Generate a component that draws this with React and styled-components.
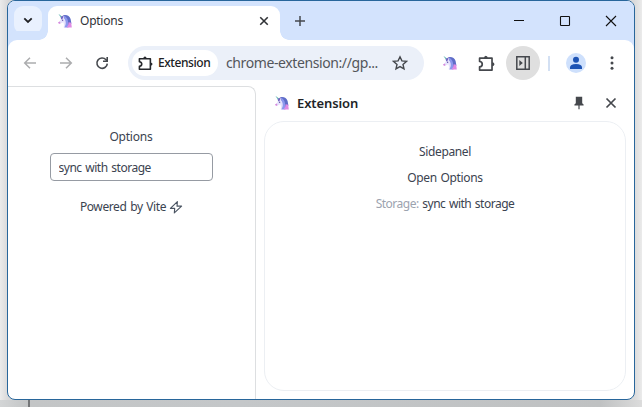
import React from "react";
import styled, { createGlobalStyle } from "styled-components";

const Global = createGlobalStyle`
  * { box-sizing: border-box; }
  body { margin: 0; overflow: hidden; font-family: "Noto Sans", "Open Sans", sans-serif; }
  svg { display: block; flex: none; }
`;

const Desktop = styled.div`
  width: 642px;
  height: 407px;
  padding: 0 7px 7px;
  background: linear-gradient(to right, transparent 28px, #747678 28px, #747678 30px, transparent 30px) 0 400px / 642px 7px no-repeat,
    linear-gradient(to right, #d3d5d6 0, #c3c5c6 28px, #c4c7c9 240px, #bfc1c2 600px, #dcdcdc 642px) 0 400px / 642px 7px no-repeat,
    linear-gradient(to right, #ebebeb, #d8d8d9 8px, #dadada 634px, #ebebeb);
`;

const Window = styled.div`
  width: 628px;
  height: 400px;
  display: flex;
  flex-direction: column;
  border: 1px solid #28669b;
  border-radius: 8px;
  background: #fff;
  overflow: hidden;
`;

const TabStrip = styled.header`
  height: 39px;
  flex: none;
  display: flex;
  align-items: flex-start;
  padding: 5px 0 0 6px;
  background: #d3e3fd;
`;

const TabSearch = styled.button`
  width: 28px;
  height: 28px;
  padding: 0;
  border: 0;
  border-radius: 9px;
  display: grid;
  place-items: center;
  background: #e9f1fe;
`;

const Tab = styled.div`
  position: relative;
  width: 232px;
  height: 34px;
  margin-left: 6px;
  display: flex;
  align-items: center;
  padding: 0 10px 4px 9px;
  border-radius: 9px 9px 0 0;
  background: #fff;
  &::before, &::after {
    content: "";
    position: absolute;
    bottom: 0;
    width: 9px;
    height: 9px;
  }
  &::before { left: -9px; background: radial-gradient(circle at 0 0, transparent 8.5px, #fff 9px); }
  &::after { right: -9px; background: radial-gradient(circle at 100% 0, transparent 8.5px, #fff 9px); }
`;

const Label = styled.span`
  font-size: ${(p) => p.$size || 12}px;
  font-weight: ${(p) => p.$weight || 400};
  letter-spacing: ${(p) => p.$track || 0}px;
  word-spacing: 1px;
  color: ${(p) => p.$color || "#3b4350"};
  line-height: 18px;
  white-space: nowrap;
`;

const TabTitle = styled(Label)`
  margin-left: 7px;
  flex: 1;
`;

const NewTab = styled.div`
  width: 36px;
  height: 30px;
  margin-left: 2px;
  display: grid;
  place-items: center;
`;

const Controls = styled.div`
  margin-left: auto;
  display: flex;
  height: 30px;
`;

const Slot = styled.div`
  width: ${(p) => p.$w || 36}px;
  height: 100%;
  flex: none;
  display: grid;
  place-items: center;
`;

const Toolbar = styled.nav`
  height: 46px;
  flex: none;
  display: flex;
  align-items: center;
  padding-left: 4px;
  background: #fff;
  border-radius: 9px 9px 0 0;
  box-shadow: 0 -9px 0 #d3e3fd;
`;

const Omnibox = styled.div`
  width: 296px;
  height: 34px;
  margin: 0 8px;
  display: flex;
  align-items: center;
  padding: 0 16px 0 4px;
  border-radius: 17px;
  background: #ebf0f9;
`;

const Chip = styled.div`
  width: 86px;
  height: 26px;
  display: flex;
  align-items: center;
  gap: 5px;
  padding-left: 6px;
  border-radius: 13px;
  background: #fff;
`;

const Url = styled(Label)`
  flex: 1;
  margin-left: 8px;
`;

const PanelToggle = styled.div`
  width: 34px;
  height: 34px;
  display: grid;
  place-items: center;
  border-radius: 50%;
  background: #dfdfdf;
`;

const Divider = styled.div`
  width: 2px;
  height: 15px;
  background: #d3e0f3;
`;

const Body = styled.div`
  flex: 1;
  display: flex;
  min-height: 0;
`;

const Page = styled.main`
  width: 248px;
  display: flex;
  flex-direction: column;
  align-items: center;
  padding: 41px 1px 0 0;
  border-top: 1px solid #dddfe1;
  border-right: 1px solid #dddfe1;
  border-radius: 0 8px 0 0;
`;

const Field = styled.input`
  width: 163px;
  height: 28px;
  margin: 7px 0 17px;
  padding: 1px 8px 0;
  border: 1px solid #969ba3;
  border-radius: 4px;
  outline: 0;
  font: 12px "Noto Sans", sans-serif;
  letter-spacing: -0.48px;
  word-spacing: 1px;
  color: #3b4350;
`;

const Powered = styled.div`
  display: flex;
  align-items: center;
  gap: 3px;
  padding-left: 1px;
`;

const SidePanel = styled.aside`
  flex: 1;
  display: flex;
  flex-direction: column;
  padding: 0 8px 8px;
`;

const PanelHeader = styled.div`
  height: 35px;
  flex: none;
  display: flex;
  align-items: center;
  padding: 0 0 2px 10px;
  margin-right: -1px;
`;

const PanelTitle = styled(Label)`
  margin-left: 7px;
  flex: 1;
`;

const PanelCard = styled.section`
  width: 362px;
  height: 270px;
  display: flex;
  flex-direction: column;
  align-items: center;
  gap: 8px;
  padding-top: 21px;
  border: 1px solid #eceff3;
  border-radius: 20px;
`;

const Muted = styled.span`
  color: #9ca3af;
`;

const Icon = ({ size = 16, children, color = "#45484d", w = 1.5, ...rest }) => (
  <svg width={size} height={size} viewBox="0 0 16 16" fill="none" stroke={color} strokeWidth={w} {...rest}>
    {children}
  </svg>
);

const Unicorn = () => (
  <svg width="16" height="16" viewBox="0 0 16 16">
    <path d="M1.4 .8 L5.6 4 L4.2 5.2Z" fill="#5fb3b0" />
    <path d="M4.2 5.4 L7.5 3 Q9.5 6 9 9.5 L8.2 14.5 H6.6 Q7.4 11.4 6.4 9.2 L3.6 10.4 L2 9.4Z" fill="#e6e2fc" />
    <path d="M6.6 2 Q12 1.2 13.6 6 L14.4 10.4 L11 14.5 Q11.6 8.6 7.6 5.8Z" fill="#5f6dc8" />
    <path d="M6.6 2.2 Q10 3.6 11 8 L11.2 14.5 H7.4 Q9.8 10 8 6.8Z" fill="#8c98ed" />
    <path d="M11.6 9.2 L14.2 9.8 L14.8 14.5 H9.6Q11.6 12.4 11.6 9.2Z" fill="#e08be4" />
    <path d="M3.8 4 L7 2 L5.8 5.4 L4 6.6Z" fill="#7568c4" />
    <path d="M1 9.2 L2.8 8.4 L3.6 10.2 L2 11Z" fill="#d58ade" />
    <circle cx="5.6" cy="7.2" r=".7" fill="#6354a4" />
  </svg>
);

const Puzzle = ({ size = 16, w = 1.6, color }) => (
  <Icon size={size} w={w} color={color} strokeLinejoin="round">
    <path d="M1.5 3H13.2V14.2H1.5V11.1Q4 10.8 4 8.6T1.5 6.1Z" />
    <path d="M5.6 3Q5.7 .6 7.4 .6T9.2 3ZM13.2 6.8Q15.5 6.9 15.5 8.6T13.2 10.4Z" fill={color || "#45484d"} stroke="none" />
  </Icon>
);

export default function App() {
  return (
    <Desktop>
      <Global />
      <Window>
        <TabStrip>
          <TabSearch aria-label="Search tabs">
            <Icon color="#202124" w={1.8}><path d="M4.3 6.3 8 10l3.7-3.7" /></Icon>
          </TabSearch>
          <Tab>
            <Unicorn />
            <TabTitle $track={-0.24} $color="#303238">Options</TabTitle>
            <Icon size={12} color="#303236" w={2.1}><path d="M3 3 13 13M13 3 3 13" /></Icon>
          </Tab>
          <NewTab><Icon color="#45484d" w={1.5}><path d="M8 3v10M3 8h10" /></Icon></NewTab>
          <Controls>
            <Slot $w={46}><Icon color="#111" w={1}><path d="M3 7.5h10" /></Icon></Slot>
            <Slot $w={46}><Icon color="#111" w={1.1}><rect x="3.5" y="3.5" width="9" height="9" rx=".6" /></Icon></Slot>
            <Slot $w={46}><Icon color="#111" w={1.1}><path d="m3 3 10 10M13 3 3 13" /></Icon></Slot>
          </Controls>
        </TabStrip>
        <Toolbar>
          <Slot><Icon color="#acadaf"><path d="M14 8H3M8 2.7 2.7 8 8 13.3" /></Icon></Slot>
          <Slot><Icon color="#acadaf"><path d="M2 8h11M8 2.7 13.3 8 8 13.3" /></Icon></Slot>
          <Slot><Icon w={1.6}><path d="M13.3 8.6A5.2 5.2 0 1 1 12 4.7L13.1 5.9" /><path d="M13.2 2v4.2H9" /></Icon></Slot>
          <Omnibox>
            <Chip>
              <Puzzle size={15} w={1.7} color="#27292d" />
              <Label $size={12} $weight={500} $track={-0.42} $color="#202124">Extension</Label>
            </Chip>
            <Url $size={14} $track={-0.4} $color="#53565b">chrome-extension://gp...</Url>
            <Icon w={1.4}><path d="m8 1.8 1.9 4.1 4.5.5L11 9.4l1 4.5-4-2.3-4 2.3 1-4.5-3.4-3 4.5-.5Z" /></Icon>
          </Omnibox>
          <Slot $w={36}><Unicorn /></Slot>
          <Slot $w={37}><Puzzle size={17} /></Slot>
          <Slot $w={35}>
            <PanelToggle>
              <Icon w={1.5}>
                <path d="M1.8 1.8h12.4v12.4H1.8zM10.3 2v12" />
                <path d="m4.3 5 3.5 3-3.5 3Z" fill="#45484d" stroke="none" />
              </Icon>
            </PanelToggle>
          </Slot>
          <Slot $w={18}><Divider /></Slot>
          <Slot>
            <svg width="20" height="20" viewBox="0 0 20 20">
              <circle cx="10" cy="10" r="10" fill="#cee0fc" />
              <circle cx="10" cy="6.8" r="3" fill="#1d53b4" />
              <path d="M4 16v-1.5Q4 11 10 11t6 3.5V16Z" fill="#1d53b4" />
            </svg>
          </Slot>
          <Slot>
            <Icon><g fill="#45484d" stroke="none"><circle cx="8" cy="2.7" r="1.5" /><circle cx="8" cy="8" r="1.5" /><circle cx="8" cy="13.3" r="1.5" /></g></Icon>
          </Slot>
        </Toolbar>
        <Body>
          <Page>
            <Label $track={-0.2}>Options</Label>
            <Field defaultValue="sync with storage" />
            <Powered>
              <Label $track={-0.4}>Powered by Vite</Label>
              <Icon size={14} w={1.3} color="#4b5563" strokeLinejoin="round"><path d="M9.6 1.8 1.6 9.6h4.9l-.4 5.2L14.4 7H9.2Z" /></Icon>
            </Powered>
          </Page>
          <SidePanel>
            <PanelHeader>
              <Unicorn />
              <PanelTitle $size={13} $weight={600} $track={-0.1} $color="#222428">Extension</PanelTitle>
              <Slot $w={32}>
                <Icon><path d="M4.8 1.8h6.4v6.4l1.4 1.4v1H8.6v3.6H7.4v-3.6H3.4v-1l1.4-1.4Z" fill="#45484d" stroke="none" /></Icon>
              </Slot>
              <Slot $w={32}><Icon w={1.7}><path d="m3.5 3.5 9 9M12.5 3.5l-9 9" /></Icon></Slot>
            </PanelHeader>
            <PanelCard>
              <Label $track={-0.38}>Sidepanel</Label>
              <Label $track={-0.36}>Open Options</Label>
              <Label $track={-0.5}><Muted>Storage:</Muted> sync with storage</Label>
            </PanelCard>
          </SidePanel>
        </Body>
      </Window>
    </Desktop>
  );
}
